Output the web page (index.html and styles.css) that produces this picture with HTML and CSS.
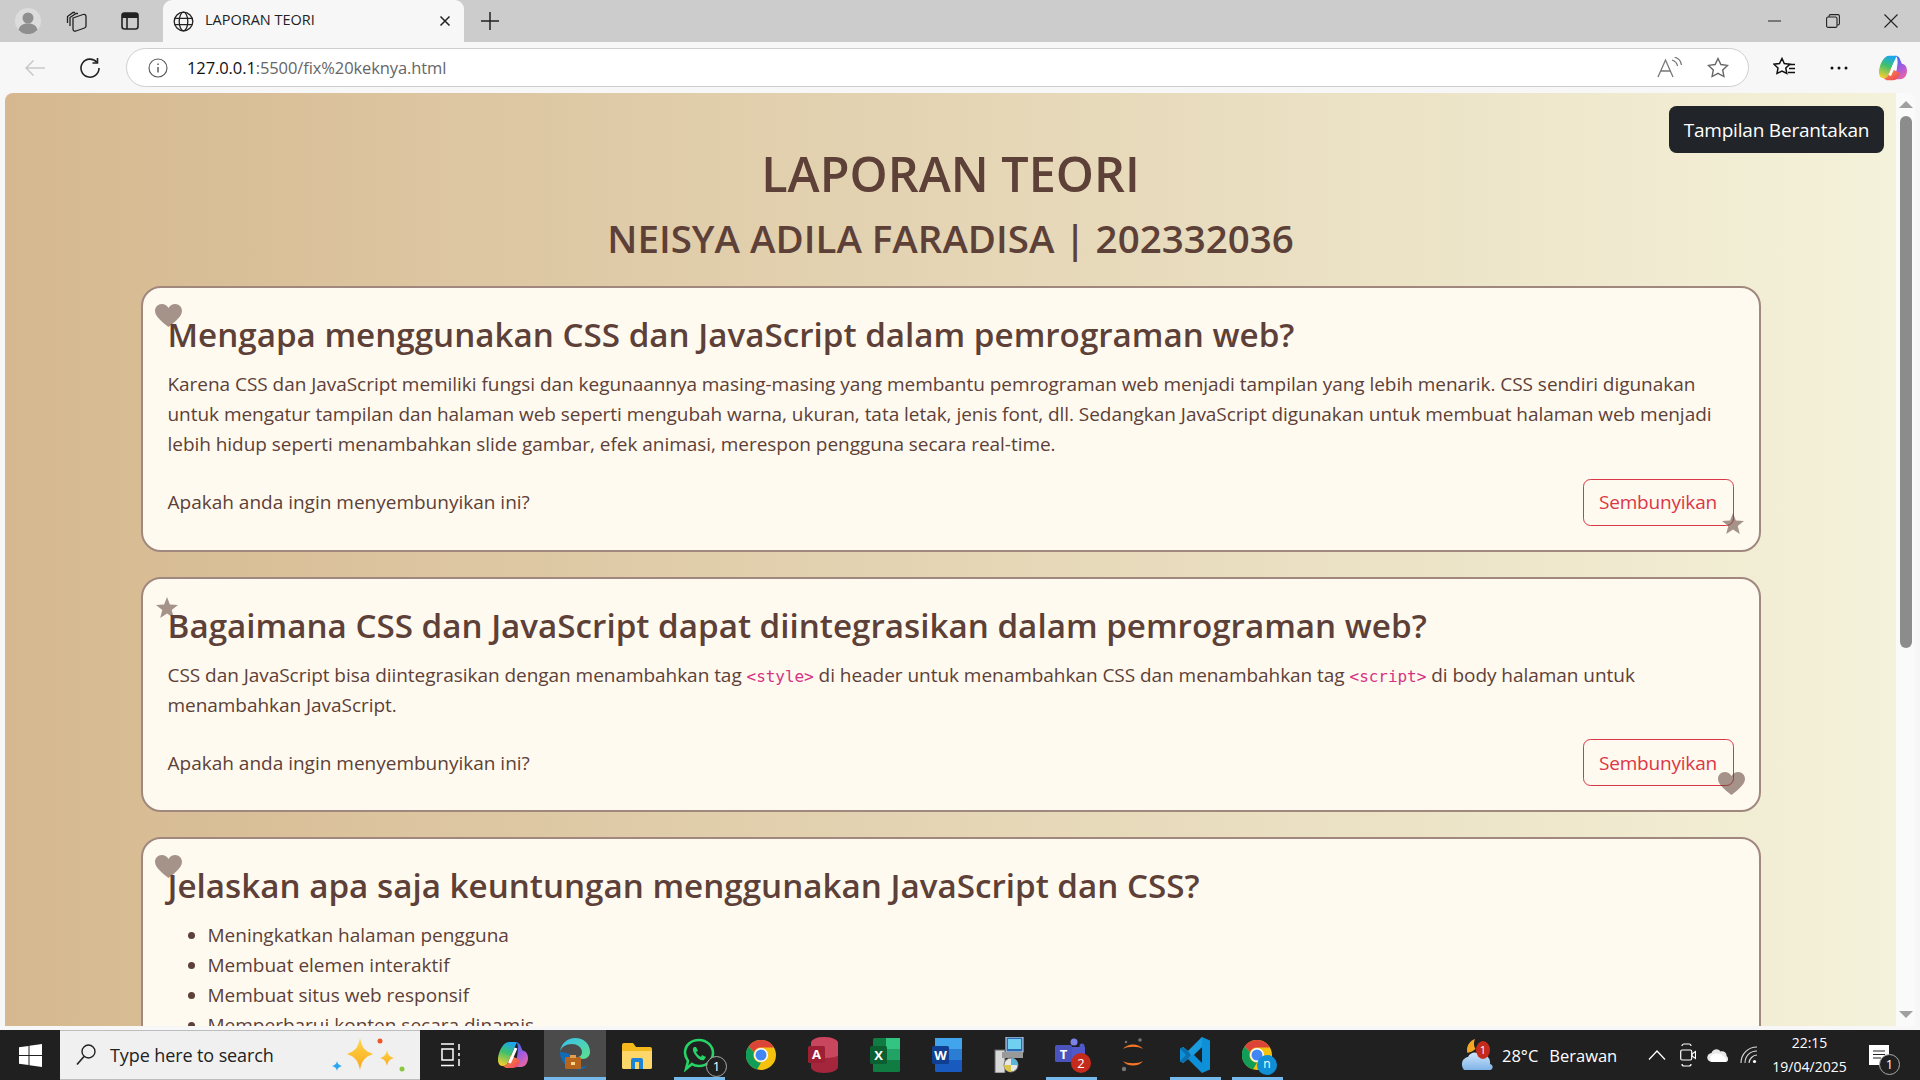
FILE: index.html
```html
<!DOCTYPE html>
<html lang="id">
<head>
<meta charset="utf-8">
<title>LAPORAN TEORI</title>
<link rel="stylesheet" href="styles.css">
</head>
<body>
<svg class="defs" width="0" height="0" aria-hidden="true">
  <defs>
    <linearGradient id="cp1" x1="0.6" y1="0" x2="0.3" y2="1"><stop offset="0" stop-color="#1aa6f0"/><stop offset=".45" stop-color="#3fc06b"/><stop offset="1" stop-color="#f6cf2e"/></linearGradient>
    <linearGradient id="cp2" x1="0.3" y1="0" x2="0.8" y2="1"><stop offset="0" stop-color="#2f6fea"/><stop offset=".5" stop-color="#a45be0"/><stop offset="1" stop-color="#f0689a"/></linearGradient>
    <linearGradient id="cp3" x1="0" y1="0" x2="1" y2="1"><stop offset="0" stop-color="#f9a03c"/><stop offset="1" stop-color="#ee3e5a"/></linearGradient>
    <linearGradient id="edge1" x1="0" y1="0" x2="1" y2="1"><stop offset="0" stop-color="#35c1f1"/><stop offset="1" stop-color="#5fe08a"/></linearGradient>
    <linearGradient id="spark" x1="0" y1="0" x2="0" y2="1"><stop offset="0" stop-color="#ffd64a"/><stop offset="1" stop-color="#f8a81c"/></linearGradient>
    <linearGradient id="cloudg" x1="0" y1="0" x2="0" y2="1"><stop offset="0" stop-color="#cfe6fa"/><stop offset="1" stop-color="#7fb3e8"/></linearGradient>
    <symbol id="heart" viewBox="0 0 27 23"><path d="M13.5 23C11 20.4 0 13.6 0 6.9 0 3 3 0 6.8 0c2.800 0 5.200 1.500 6.700 3.900C15 1.500 17.400 0 20.200 0 24 0 27 3 27 6.900c0 6.700-11 13.500-13.500 16.100z"/></symbol>
    <symbol id="star" viewBox="0 0 22 21"><path d="M11 0l2.900 7.600 8.100.4-6.300 5.100 2.100 7.900L11 16.500 4.200 21l2.100-7.900L0 8l8.100-.4z"/></symbol>
    <symbol id="copilot" viewBox="0 0 30 30">
      <path d="M19 2H11C5 2 1 11 0 18c-.5 4 1 8 5 8 3 0 4.500-2 5.500-5z" fill="url(#cp1)"/>
      <path d="M17 2c3 0 5 1.500 6 5l1.500 3.500C28 11 30 14 30 18c0 5-3 9-7 9h-8l4-10 1-8c0-4-1-7-3-7z" fill="url(#cp2)"/>
      <path d="M5 26c3 0 4.500-2 5.500-5l2-5.500L22 20c-1 5-3 8-7 8H8z" fill="url(#cp3)"/>
      <path d="M18 8l-6.500 15" stroke="#fff" stroke-width="3" fill="none"/>
    </symbol>
    <symbol id="chrome" viewBox="0 0 30 30">
      <circle cx="15" cy="15" r="15" fill="#f4c20d"/>
      <path d="M15 0a15 15 0 0 1 13 7.500H15a7.500 7.500 0 0 0-7 4.500L2.500 6.500A15 15 0 0 1 15 0z" fill="#db4437"/>
      <path d="M2.500 6.500L8 12a7.500 7.500 0 0 0 7 10.500L11 29.500A15 15 0 0 1 2.500 6.500z" fill="#0f9d58"/>
      <circle cx="15" cy="15" r="7" fill="#fff"/><circle cx="15" cy="15" r="5.500" fill="#4285f4"/>
    </symbol>
  </defs>
</svg>

<div class="tabstrip">
  <span class="tb-ic tb-profile"><svg width="26" height="26" viewBox="0 0 26 26"><circle cx="13" cy="13" r="13" fill="#dcdcdc"/><circle cx="13" cy="10" r="5.500" fill="#8f8f8f"/><path d="M3.500 22c1-5 5-6.500 9.500-6.500s8.500 1.500 9.500 6.500a13 13 0 0 1-19 0z" fill="#8f8f8f"/></svg></span>
  <span class="tb-ic tb-coll"><svg width="22" height="22" viewBox="0 0 22 22" fill="none" stroke="#222" stroke-width="1.300"><path d="M1.500 13V6.500L7 2.500h2M4 16V7.500L10 3.500h2"/><path d="M7 8l10-3.500c1.500-.5 3 0 3 2V16c0 1-.5 1.500-1.500 2L10 21c-2 .5-3-.5-3-2z"/></svg></span>
  <span class="tb-ic tb-tabs"><svg width="20" height="20" viewBox="0 0 20 20"><rect x="2" y="2" width="16" height="16" rx="2.500" fill="none" stroke="#222" stroke-width="1.600"/><path d="M2 4.500A2.500 2.500 0 0 1 4.500 2h11A2.500 2.500 0 0 1 18 4.500V7H2z" fill="#222"/><path d="M7 7v11" stroke="#222" stroke-width="1.600"/></svg></span>
  <div class="tab">
    <svg class="tab-globe" width="21" height="21" viewBox="0 0 21 21" fill="none" stroke="#222" stroke-width="1.300"><circle cx="10.500" cy="10.500" r="9.300"/><ellipse cx="10.500" cy="10.500" rx="4.300" ry="9.300"/><path d="M1.800 7.300h17.400M1.800 13.700h17.400"/></svg>
    <span class="tab-title">LAPORAN TEORI</span>
    <svg class="tab-x" width="12" height="12" viewBox="0 0 12 12" stroke="#222" stroke-width="1.500"><path d="M1.500 1.500l9 9M10.500 1.500l-9 9"/></svg>
  </div>
  <svg class="tab-plus" width="18" height="18" viewBox="0 0 18 18" stroke="#222" stroke-width="1.500"><path d="M9 0v18M0 9h18"/></svg>
  <div class="winctl">
    <span class="wc"><svg width="14" height="14" viewBox="0 0 14 14" stroke="#222"><path d="M0 7h13"/></svg></span>
    <span class="wc"><svg width="14" height="14" viewBox="0 0 14 14" fill="none" stroke="#222" stroke-width="1.100"><rect x=".6" y="3" width="10.400" height="10.400" rx="1.500"/><path d="M3 3V2a1.500 1.500 0 0 1 1.500-1.400H12A1.500 1.500 0 0 1 13.400 2v7.500A1.500 1.500 0 0 1 12 11h-1"/></svg></span>
    <span class="wc"><svg width="14" height="14" viewBox="0 0 14 14" stroke="#222" stroke-width="1.100"><path d="M.5.500l13 13M13.500.500l-13 13"/></svg></span>
  </div>
</div>

<div class="toolbar">
  <svg class="tl-back" width="22" height="18" viewBox="0 0 22 18" fill="none" stroke="#c9c9c9" stroke-width="1.500"><path d="M21 9H2M9.500 1.500L2 9l7.500 7.500"/></svg>
  <svg class="tl-refresh" width="22" height="22" viewBox="0 0 22 22" fill="none" stroke="#222" stroke-width="1.600"><path d="M18 5.500A9 9 0 1 0 20 11"/><path d="M18.500 1v5h-5"/></svg>
  <div class="addr">
    <svg class="addr-i" width="20" height="20" viewBox="0 0 20 20" fill="none" stroke="#555" stroke-width="1.100"><circle cx="10" cy="10" r="9"/><path d="M10 9v5.500M10 5.500v1.500" stroke-width="1.400"/></svg>
    <span class="url"><b>127.0.0.1</b>:5500/fix%20keknya.html</span>
    <svg class="addr-read" width="26" height="22" viewBox="0 0 26 22" fill="none" stroke="#777" stroke-width="1.300"><path d="M1 20L8.500 3 16 20M4 14h9"/><path d="M15 3c3 1 5 3 5.500 6M17.500 0c4 1.300 6.500 4 7 8"/></svg>
    <svg class="addr-star" width="22" height="21" viewBox="0 0 22 21" fill="none" stroke="#666" stroke-width="1.400"><path d="M11 1.500l2.900 6 6.600.9-4.800 4.600 1.200 6.500L11 16.300l-5.900 3.200 1.200-6.500L1.500 8.400l6.600-.9z"/></svg>
  </div>
  <svg class="tl-fav" width="23" height="21" viewBox="0 0 23 21" fill="none" stroke="#111" stroke-width="1.500"><path d="M9 1.500l2.300 5 5.500.7-4 3.800 1 5.500L9 14l-5 2.500 1-5.500-4-3.800 5.500-.7z"/><path d="M15 7.500h7M16 11.500h6M15 15.500h7"/></svg>
  <svg class="tl-dots" width="18" height="4" viewBox="0 0 18 4" fill="#111"><circle cx="2" cy="2" r="1.500"/><circle cx="9" cy="2" r="1.500"/><circle cx="16" cy="2" r="1.500"/></svg>
  <svg class="tl-cop" width="28" height="28"><use href="#copilot"/></svg>
</div>

<div class="viewport">
  <div class="page">
    <button class="messy">Tampilan Berantakan</button>
    <header class="head">
      <h1>LAPORAN TEORI</h1>
      <h2>NEISYA ADILA FARADISA | 202332036</h2>
    </header>
    <main class="cards">
      <section class="card">
        <svg class="deco deco-heart-tl"><use href="#heart"/></svg>
        <h3>Mengapa menggunakan CSS dan JavaScript dalam pemrograman web?</h3>
        <p>Karena CSS dan JavaScript memiliki fungsi dan kegunaannya masing-masing yang membantu pemrograman web menjadi tampilan yang lebih menarik. CSS sendiri digunakan<br>untuk mengatur tampilan dan halaman web seperti mengubah warna, ukuran, tata letak, jenis font, dll. Sedangkan JavaScript digunakan untuk membuat halaman web menjadi<br>lebih hidup seperti menambahkan slide gambar, efek animasi, merespon pengguna secara real-time.</p>
        <div class="ask"><span>Apakah anda ingin menyembunyikan ini?</span><button class="hide">Sembunyikan</button></div>
        <svg class="deco deco-star-br"><use href="#star"/></svg>
      </section>
      <section class="card">
        <svg class="deco deco-star-tl"><use href="#star"/></svg>
        <h3>Bagaimana CSS dan JavaScript dapat diintegrasikan dalam pemrograman web?</h3>
        <p>CSS dan JavaScript bisa diintegrasikan dengan menambahkan tag <code>&lt;style&gt;</code> di header untuk menambahkan CSS dan menambahkan tag <code>&lt;script&gt;</code> di body halaman untuk<br>menambahkan JavaScript.</p>
        <div class="ask"><span>Apakah anda ingin menyembunyikan ini?</span><button class="hide">Sembunyikan</button></div>
        <svg class="deco deco-heart-br"><use href="#heart"/></svg>
      </section>
      <section class="card">
        <svg class="deco deco-heart-tl"><use href="#heart"/></svg>
        <h3>Jelaskan apa saja keuntungan menggunakan JavaScript dan CSS?</h3>
        <ul>
          <li>Meningkatkan halaman pengguna</li>
          <li>Membuat elemen interaktif</li>
          <li>Membuat situs web responsif</li>
          <li>Memperbarui konten secara dinamis</li>
        </ul>
      </section>
    </main>
  </div>
  <div class="scrollbar">
    <span class="sb-up"></span>
    <span class="sb-thumb"></span>
    <span class="sb-down"></span>
  </div>
</div>

<footer class="taskbar">
  <span class="start"><svg width="23" height="23" viewBox="0 0 23 23" fill="#fff"><path d="M0 3.300l9.500-1.300v9H0zM10.500 1.800L23 0v11H10.500zM0 12h9.500v9L0 19.700zM10.500 12H23v11l-12.500-1.800z"/></svg></span>
  <div class="search">
    <svg class="search-ic" width="20" height="22" viewBox="0 0 20 22" fill="none" stroke="#222" stroke-width="1.400"><circle cx="12.500" cy="7.500" r="6.500"/><path d="M8 12.500L1 20.500" stroke-width="1.600"/></svg>
    <span class="search-txt">Type here to search</span>
    <svg class="search-art" width="80" height="40" viewBox="0 0 80 40">
      <path d="M30 3c2 10 5 13 13 16-8 3-11 6-13 16-2-10-5-13-13-16 8-3 11-6 13-16z" fill="url(#spark)"/>
      <path d="M57 15c1 5 3 7 7 8-4 1-6 3-7 8-1-5-3-7-7-8 4-1 6-3 7-8z" fill="url(#spark)"/>
      <path d="M7 26c.5 3 2 4 5 5-3 1-4.500 2-5 5-.5-3-2-4-5-5 3-1 4.500-2 5-5z" fill="#2aa7f0"/>
      <circle cx="50" cy="6" r="2.500" fill="#ea5a28"/><circle cx="72" cy="34" r="2.500" fill="#8cc63f"/>
    </svg>
  </div>
  <span class="slot"><svg width="20" height="24" viewBox="0 0 20 24" fill="none" stroke="#fff" stroke-width="1.500"><path d="M0 1h13M0 22.500h13M1 6h11v11H1zM18 1v6M18 10v3M18 16v7"/></svg></span>
  <span class="slot"><svg width="30" height="30"><use href="#copilot"/></svg></span>
  <span class="slot slot-active">
    <svg width="32" height="34" viewBox="0 0 32 34"><path d="M1 15C2 6 9 1 16 1c9 0 15 6 15 14 0 4-3 7-7 7-3 0-5-1-6-2 3 0 5-2 5-5 0-5-5-8-10-8C7 7 2 10 1 15z" fill="url(#edge1)"/><path d="M1 15c0 8 5 15 14 17 6 1 10 0 13-3-3 1-7 1-10 0-6-2-8-7-7-12-3-1-8-2-10-2z" fill="#0f6cbd"/><rect x="6" y="20" width="16" height="12" rx="1.500" fill="#b5651d"/><rect x="11" y="18" width="6" height="3" fill="#e0a050"/><rect x="12" y="25" width="4" height="3" fill="#ffd58a"/></svg>
  </span>
  <span class="slot"><svg width="30" height="27" viewBox="0 0 30 27"><path d="M0 3a2 2 0 0 1 2-2h9l3 4h14a2 2 0 0 1 2 2v18a2 2 0 0 1-2 2H2a2 2 0 0 1-2-2z" fill="#f5b91e"/><path d="M0 9h30v16a2 2 0 0 1-2 2H2a2 2 0 0 1-2-2z" fill="#fdd76a"/><path d="M9 27v-9a2 2 0 0 1 2-2h8a2 2 0 0 1 2 2v9h-4v-7h-4v7z" fill="#1b84d8"/></svg></span>
  <span class="slot slot-on">
    <svg width="32" height="34" viewBox="0 0 32 34" fill="none"><path d="M3 31l2-8C3 20 2 17 2 15 2 7 8 2 16 2s14 6 14 13-6 13-14 13c-3 0-5-.5-7-2z" stroke="#25d366" stroke-width="2.600"/><path d="M11 9c-2 2-1 5 2 9s6 5 8 4l2-3-4-2-1 2c-2-1-4-3-5-5l2-1-2-4z" fill="#25d366"/></svg>
    <span class="ring">1</span>
  </span>
  <span class="slot"><svg width="30" height="30"><use href="#chrome"/></svg></span>
  <span class="slot"><svg width="30" height="36" viewBox="0 0 30 36"><path d="M3 6c0-3 5-6 13-6s14 3 14 6v24c0 3-6 6-14 6S3 33 3 30z" fill="#a4263c"/><path d="M3 6c0-3 5-6 13-6s14 3 14 6v12c0 2-6 3-14 3S3 20 3 18z" fill="#c8475f"/><rect y="9" width="17" height="17" rx="1.500" fill="#9c1f33"/><text x="8.500" y="22" class="ico-letter">A</text></svg></span>
  <span class="slot"><svg width="30" height="34" viewBox="0 0 30 34"><rect x="3" width="27" height="34" rx="1.500" fill="#107c41"/><rect x="16" width="14" height="11" fill="#33c481"/><rect x="16" y="11" width="14" height="11" fill="#21a366"/><rect y="8" width="17" height="18" rx="1.500" fill="#0b5f30"/><text x="8.500" y="22" class="ico-letter">X</text></svg></span>
  <span class="slot"><svg width="30" height="34" viewBox="0 0 30 34"><rect x="3" width="27" height="34" rx="1.500" fill="#185abd"/><rect x="3" width="27" height="11" fill="#41a5ee"/><rect x="3" y="11" width="27" height="11" fill="#2b7cd3"/><rect y="8" width="17" height="18" rx="1.500" fill="#103f91"/><text x="8.500" y="22" class="ico-letter">W</text></svg></span>
  <span class="slot"><svg width="30" height="36" viewBox="0 0 30 36"><rect x="12" width="17" height="15" fill="#2a6db5" stroke="#ddd"/><rect x="14" y="2" width="13" height="10" fill="#6fd0f0"/><rect x="1" y="13" width="10" height="23" fill="#d8d8d8" stroke="#666"/><rect x="8" y="15" width="21" height="6" fill="#999"/><circle cx="17" cy="28" r="7" fill="#e6e6e6" stroke="#777"/><path d="M17 21a7 7 0 0 1 7 7h-7z" fill="#5ab4d8"/><path d="M17 28v7a7 7 0 0 1-7-7z" fill="#d9c64a"/></svg></span>
  <span class="slot slot-on">
    <svg width="32" height="34" viewBox="0 0 32 34"><circle cx="19" cy="4" r="3.500" fill="#7b83eb"/><circle cx="27" cy="8" r="2.500" fill="#5059c9"/><path d="M14 9h16v12H14z" fill="#5059c9"/><rect y="7" width="17" height="17" rx="1.500" fill="#4b53bc"/><text x="8.500" y="20.500" class="ico-letter">T</text></svg>
    <span class="badge badge-teams">2</span>
  </span>
  <span class="slot"><svg width="26" height="36" viewBox="0 0 26 36" fill="none"><path d="M3 12c4-6 16-6 20 0-5-3-15-3-20 0zM3 24c4 6 16 6 20 0-5 3-15 3-20 0z" fill="#f37726"/><circle cx="20" cy="3" r="1.800" fill="#767677"/><circle cx="4" cy="32" r="2.200" fill="#767677"/><circle cx="6" cy="5" r="1.200" fill="#767677"/></svg></span>
  <span class="slot slot-on"><svg width="30" height="36" viewBox="0 0 30 36"><path d="M22 0l8 3.500v29L22 36 8 22l-5 4-3-2V12l3-2 5 4zM22 10l-8 8 8 8z" fill="#0e90d8"/><path d="M0 24l3 2 5-4 14-12V0L8 14l-5-4-3 2 6 6z" fill="#1f9de0" opacity=".8"/><path d="M0 12l3-2 5 4 3 4-3 4-5 4-3-2 6-6z" fill="#0a6fae"/></svg></span>
  <span class="slot slot-on">
    <svg width="30" height="30"><use href="#chrome"/></svg>
    <span class="badge badge-n">n</span>
  </span>
  <div class="tray">
    <span class="weather"><svg width="36" height="36" viewBox="0 0 36 36"><path d="M14 2c-5 2-8 6-8 11 0 1 0 2 .5 3 3-1 6-2 8-4-2-3-2-7-.5-10z" fill="#f5a623"/><path d="M3 33c-4-5-2-12 4-13 2-5 9-6 12-2 6-1 11 3 10 9 4 1 3 6 0 6z" fill="url(#cloudg)"/></svg><span class="badge badge-wx">1</span></span>
    <span class="wx-text"><span>28°C</span><span>Berawan</span></span>
    <span class="tray-ic"><svg width="18" height="10" viewBox="0 0 18 10" fill="none" stroke="#fff" stroke-width="1.300"><path d="M1 9.500L9 1l8 8.500"/></svg></span>
    <span class="tray-ic"><svg width="16" height="24" viewBox="0 0 16 24" fill="none" stroke="#fff" stroke-width="1.200"><path d="M2 3c0-1 1-2 2-2h5c1 0 2 1 2 2M2 21c0 1 1 2 2 2h5c1 0 2-1 2-2"/><rect x=".7" y="7" width="11" height="10" rx="1.500"/><path d="M12 11l3.500-2.500v7L12 13z"/></svg></span>
    <span class="tray-ic"><svg width="22" height="14" viewBox="0 0 22 14"><path d="M5 14a4.500 4.500 0 0 1-.5-9C6 1 11 0 13.500 3.500 17 2.500 20 5 19.500 8c2 1 2.500 6-1 6z" fill="#e8e8e8"/><path d="M5 14a4 4 0 0 1 0-7c3-2 8-2 11 1 2 1 4 3 3 6z" fill="#fff"/></svg></span>
    <span class="tray-ic"><svg width="18" height="18" viewBox="0 0 18 18" fill="none" stroke="#ddd" stroke-width="1.100"><path d="M1 17C1 8 8 1 17 1M5 17c0-7 5-12 12-12M9 17c0-4 4-8 8-8"/><circle cx="14.500" cy="15.500" r="1.600" fill="#fff" stroke="none"/></svg></span>
    <span class="clock"><span>22:15</span><span>19/04/2025</span></span>
    <span class="notif">
      <svg width="20" height="20" viewBox="0 0 20 20"><path d="M0 0h20v20H0z" fill="#fff"/><path d="M4 6h12M4 9.500h12M4 13h8" stroke="#222" stroke-width="1.200"/></svg>
      <span class="ring ring-notif">1</span>
    </span>
  </div>
</footer>
</body>
</html>
```
FILE: styles.css
```css
* { box-sizing: border-box; }
html, body { margin: 0; height: 100%; }
body {
  display: flex;
  flex-direction: column;
  height: 1080px;
  overflow: hidden;
  background: #f7f7f7;
  font-family: "Open Sans", "Noto Sans", sans-serif;
}
.defs { position: absolute; }

/* tab strip */
.tabstrip {
  height: 42px;
  flex: none;
  background: #cccccc;
  display: flex;
  align-items: center;
}
.tb-ic { display: flex; align-items: center; justify-content: center; flex: none; }
.tb-profile { width: 26px; margin-left: 15px; }
.tb-coll { width: 22px; margin-left: 25px; }
.tb-tabs { width: 20px; margin-left: 32px; }
.tab {
  width: 301px;
  height: 42px;
  margin-left: 23px;
  background: #f7f7f7;
  border-radius: 9px 9px 0 0;
  display: flex;
  align-items: center;
  padding-left: 10px;
  flex: none;
}
.tab-title { font-size: 14.500px; line-height: 20px; margin-top: -2px; color: #222; margin-left: 11px; width: 234px; white-space: nowrap; }
.tab-x { flex: none; }
.tab-plus { margin-left: 17px; flex: none; }
.winctl { margin-left: auto; display: flex; padding-right: 0; }
.wc { width: 58px; display: flex; justify-content: center; align-items: center; }

/* toolbar */
.toolbar {
  height: 51px;
  flex: none;
  background: #f7f7f7;
  display: flex;
  align-items: center;
}
.tl-back { margin-left: 24px; flex: none; }
.tl-refresh { margin-left: 33px; flex: none; }
.addr {
  width: 1623px;
  height: 39px;
  margin-left: 25px;
  background: #fff;
  border: 1px solid #cfcfcf;
  border-radius: 20px;
  display: flex;
  align-items: center;
  flex: none;
}
.addr-i { margin-left: 21px; flex: none; }
.url { margin-left: 19px; font-size: 16.500px; letter-spacing: -.1px; color: #666; flex: 1; }
.url b { font-weight: 400; color: #111; }
.addr-read { flex: none; margin-right: 24px; }
.addr-star { flex: none; margin-right: 19px; }
.tl-fav { margin-left: 24px; flex: none; }
.tl-dots { margin-left: 34px; flex: none; }
.tl-cop { margin-left: 31px; flex: none; }

/* browser viewport */
.viewport {
  height: 933px;
  flex: none;
  margin-left: 5px;
  margin-right: 5px;
  display: flex;
  background: #fafafa;
  border-radius: 8px 8px 0 0;
  overflow: hidden;
}
.page {
  position: relative;
  width: 1891px;
  flex: none;
  overflow: hidden;
  padding-top: 51px;
  background: linear-gradient(90deg, #d5b88f, #f4f2da);
  color: #5d4037;
}
.scrollbar {
  flex: 1;
  display: flex;
  flex-direction: column;
  align-items: center;
  padding-top: 8px;
  position: relative;
}
.sb-up { width: 0; height: 0; border-left: 7px solid transparent; border-right: 7px solid transparent; border-bottom: 7px solid #a0a0a0; }
.sb-thumb { width: 12px; height: 532px; margin-top: 8px; background: #8c8c8c; border-radius: 6px; }
.sb-down { width: 0; height: 0; border-left: 7px solid transparent; border-right: 7px solid transparent; border-top: 7px solid #a0a0a0; margin-top: 363px; }

.messy {
  position: absolute;
  top: 13px;
  right: 12px;
  width: 215px;
  height: 47px;
  background: #212529;
  color: #fff;
  border: 0;
  border-radius: 7.500px;
  font: 400 19px "Open Sans", sans-serif;
  letter-spacing: -.2px;
}
.head { text-align: center; }
h1 {
  margin: 0 0 12.500px;
  font-size: 48.500px;
  line-height: 58px;
  font-weight: 600;
}
h2 {
  margin: 0 0 25.500px;
  font-size: 38.500px;
  line-height: 46px;
  font-weight: 600;
}
.cards {
  width: 1620px;
  margin: 0 auto;
  display: flex;
  flex-direction: column;
  gap: 25px;
}
.card {
  position: relative;
  background: #fffaf0;
  border: 2.500px solid #a1887f;
  border-radius: 20px;
  padding: 26px 25px 24px;
  font-size: 19px;
  line-height: 30px;
  flex: none;
}
h3 {
  margin: 0 0 13px;
  font-size: 33.200px;
  line-height: 42px;
  font-weight: 600;
  white-space: nowrap;
}
.card p { margin: 0 0 19.500px; white-space: nowrap; letter-spacing: -.04px; }
.ask { display: flex; justify-content: space-between; align-items: center; }
.hide {
  width: 151px;
  height: 47px;
  background: transparent;
  color: #dc3545;
  border: 1.250px solid #dc3545;
  border-radius: 7.500px;
  font: 400 19px "Open Sans", sans-serif;
  letter-spacing: -.2px;
}
code { font: 16px "DejaVu Sans Mono", monospace; color: #d63384; }
.card ul { margin: 0; padding-left: 40px; }

.deco { position: absolute; fill: #5d4037; opacity: .55; }
.deco-heart-tl { width: 27px; height: 23px; left: 12.500px; top: 16px; }
.deco-star-tl { width: 22px; height: 21px; left: 13.500px; top: 18px; }
.deco-star-br { width: 22px; height: 21px; right: 14.500px; bottom: 16px; }
.deco-heart-br { width: 27px; height: 23px; right: 13.500px; bottom: 15px; }

/* taskbar */
.taskbar {
  height: 50px;
  margin-top: 4px;
  flex: none;
  background: #202020;
  display: flex;
  align-items: center;
  color: #fff;
}
.start { width: 60px; display: flex; justify-content: center; align-items: center; flex: none; height: 50px; }
.search {
  width: 360px;
  height: 50px;
  flex: none;
  background: #f0f0f0;
  border-top: 1px solid #bdbdbd;
  border-bottom: 1px solid #bdbdbd;
  display: flex;
  align-items: center;
  padding-left: 16px;
  color: #222;
}
.search-ic { flex: none; }
.search-txt { margin-left: 14px; font-size: 18px; letter-spacing: -.1px; white-space: nowrap; width: 218px; }
.search-art { flex: none; margin-left: 2px; }
.slot {
  width: 62px;
  height: 50px;
  flex: none;
  display: flex;
  align-items: center;
  justify-content: center;
  position: relative;
}
.slot-active { background: #4b4b4b; border-bottom: 3px solid #76b9ed; }
.slot-on::after {
  content: "";
  position: absolute;
  left: 5.500px;
  right: 5.500px;
  bottom: 0;
  height: 3px;
  background: #76b9ed;
}
.ico-letter { font: 700 13px "Open Sans", sans-serif; fill: #fff; text-anchor: middle; }
.ring {
  position: absolute;
  right: 3px;
  bottom: 3px;
  width: 21px;
  height: 21px;
  border-radius: 50%;
  border: 1px solid #aaa;
  background: #202020;
  font-size: 13px;
  line-height: 19px;
  text-align: center;
  color: #fff;
}
.badge {
  position: absolute;
  border-radius: 50%;
  text-align: center;
  color: #fff;
}
.badge-teams { width: 20px; height: 20px; right: 11px; bottom: 7px; background: #c42b1c; font-size: 13px; line-height: 20px; }
.badge-n { width: 20px; height: 20px; right: 11px; bottom: 5px; background: #0f8fd6; font-size: 12px; line-height: 18px; }
.badge-wx { width: 14px; height: 18px; right: 7px; top: 11px; background: #c42b1c; font-size: 11px; line-height: 18px; }
.tray { margin-left: auto; display: flex; align-items: center; height: 50px; padding-right: 17px; }
.weather { width: 37px; height: 50px; position: relative; display: flex; align-items: center; justify-content: center; }
.wx-text { width: 145px; padding-left: 5px; display: flex; gap: 11px; font-size: 16.500px; white-space: nowrap; }
.tray-ic { width: 30.500px; display: flex; justify-content: center; align-items: center; }
.clock { width: 91px; margin-left: 0; display: flex; flex-direction: column; align-items: center; font-size: 14px; line-height: 24px; white-space: nowrap; }
.notif { width: 48px; height: 50px; position: relative; display: flex; align-items: center; justify-content: center; }
.ring-notif { right: 3px; bottom: 5px; }
```
